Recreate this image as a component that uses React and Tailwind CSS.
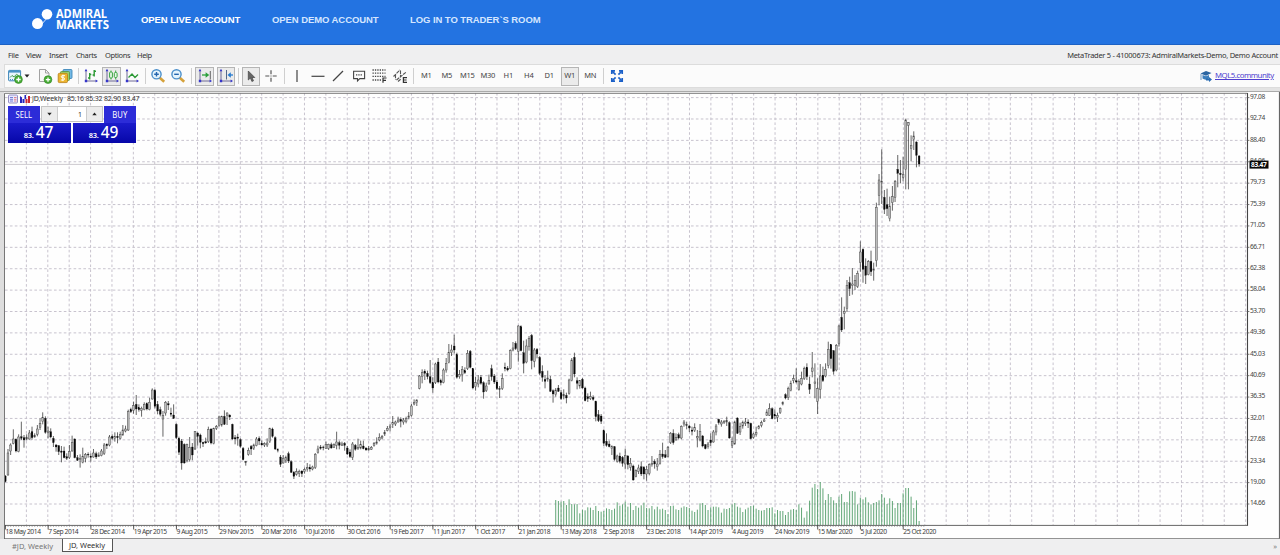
import { clsx } from "clsx";

const STEP = 2.672;
const X0 = 5;
const TOP = 92;

// each segment: first bar, y of its origin, and "high top bottom low dir" in thirds of a pixel
const SEGMENTS = [
  {
    first: 0,
    top: 375,
    bars: `300 303 320 322 d|222 234 300 302 u|205 210 228 240 u|163 192 205 208 u|190 193 228 232 d|178 186 230 232 u|140 185 190 195 d|180 188 195 218 d
178 188 192 196 u|165 174 192 194 u|155 170 188 194 d|175 182 186 188 u|150 162 178 184 u|130 145 158 165 u|112 128 140 148 u|124 130 172 176 d
155 168 172 190 u|160 170 186 190 d|183 190 203 216 d|207 210 216 230 d|210 212 230 240 d|213 228 232 262 d|215 228 248 250 d|235 245 250 255 d
210 230 248 252 u|182 202 228 230 u|190 192 248 250 d|240 248 256 258 d|238 250 254 278 u|218 244 262 265 u|234 238 250 262 u|232 238 240 248 d
235 244 247 260 d|222 234 246 248 u|230 236 246 252 d|232 240 244 246 u|222 228 242 244 u|204 210 236 240 u|205 208 212 222 d|180 186 210 214 u
178 184 190 196 d|172 184 190 200 u|172 184 188 205 d|170 178 190 194 u|150 165 180 182 u|152 162 168 172 u|104 110 165 168 u|98 104 110 114 d
80 92 106 116 u|60 88 102 120 d|88 98 104 110 d|95 100 106 125 u|82 88 104 106 u|82 86 102 106 d|68 82 104 106 u|40 45 72 74 u
42 46 94 100 d|78 88 108 118 d|95 104 118 124 d|108 122 132 185 u|78 82 114 122 u|78 86 90 105 d|98 114 118 125 d|88 120 130 132 d
145 148 188 192 d|185 190 232 240 d|192 198 264 284 d|205 208 264 266 d|206 208 256 262 u|186 218 254 260 u|204 216 240 256 d|168 170 222 225 u
172 174 184 212 d|176 180 202 220 d|200 202 206 216 d|188 200 204 206 d|155 164 200 204 u|160 162 204 208 d|158 160 206 208 u|150 155 160 165 u
122 126 152 155 u|122 124 150 155 u|106 124 148 150 d|112 114 122 150 u|118 120 126 135 d|146 148 192 194 d|180 188 192 208 d|176 186 190 212 d
190 194 214 218 d|216 220 254 256 d|258 260 262 272 d|218 226 238 242 u|210 214 222 240 d|206 210 220 225 u|186 192 212 214 u|184 190 198 210 d
196 205 210 212 d|202 206 210 216 u|190 204 210 216 u|158 160 200 204 u|158 162 184 188 d|184 188 222 225 d|220 224 226 232 d|240 246 268 276 d
240 250 264 266 u|242 248 256 264 u|230 236 258 264 d|256 260 292 294 d|288 292 304 312 d|280 290 298 302 u|284 290 296 306 u|286 288 296 306 d
278 284 290 296 u|264 278 282 290 u|268 278 282 290 d|272 276 282 286 u|234 238 278 282 u|212 222 232 236 u|210 216 220 224 d|212 216 218 226 d
200 208 220 222 u|206 208 220 225 u`,
  },
  {
    first: 122,
    top: 320,
    bars: `368 374 384 386 d|370 374 382 384 u|335 366 376 388 u|362 368 376 388 d|365 372 376 378 u|366 370 376 392 d
378 384 402 405 d|388 396 410 414 d|366 372 412 420 u|372 376 388 392 d|356 382 386 390 u|362 374 384 388 u|362 378 386 388 d|382 384 390 392 d
378 386 390 392 u|378 382 388 390 u|366 370 376 380 u|352 366 370 374 u|340 352 360 364 u|345 350 354 358 u|330 338 342 348 u|318 325 332 334 u
312 318 322 334 u|288 308 314 324 u|302 306 312 318 u|290 300 306 308 u|292 298 304 322 d|294 300 306 314 u|290 296 304 310 u|276 288 292 298 u
252 258 286 290 u|238 248 252 256 u|238 240 248 258 u|165 168 205 208 u|148 158 170 190 u|148 154 160 180 d|152 160 170 178 d|120 170 188 192 d
172 188 204 218 d|128 132 188 192 u|114 126 186 190 d|176 182 188 196 d|145 150 188 190 u|114 130 150 158 u|72 98 128 130 u|74 90 98 108 u
44 78 90 100 d|98 104 172 176 d|150 164 170 176 u|138 148 164 185 u|142 152 158 162 d|90 100 146 150 u|90 94 142 145 d|144 146 204 208 d
170 188 200 212 u|165 180 192 202 u|165 172 190 194 d|184 188 216 236 d|188 198 212 216 u|164 182 192 194 u|134 146 170 182 d|162 168 186 192 d
180 186 206 210 d|198 206 208 234 d|160 176 206 210 u|128 142 146 154 d|138 144 150 154 d|88 92 146 148 u|66 84 90 94 u|64 70 86 90 d
16 18 94 125 u|16 20 92 94 d|62 98 130 160 d|58 78 126 130 u|48 56 80 92 u|42 46 122 148 d|84 90 124 142 u|84 88 102 115 d
108 112 160 165 d|136 154 172 185 d|166 178 184 205 d|152 174 178 185 u|168 178 214 216 d|208 212 222 248 d|204 210 224 230 u|195 204 214 216 d
210 218 236 240 d|208 224 228 238 u|218 226 234 250 d|176 180 220 224 u|114 120 182 184 u|98 112 162 172 d|172 182 190 208 d|180 182 198 206 u
174 178 204 206 d|200 204 242 244 d|220 230 236 246 d|215 230 236 240 u|226 232 238 242 d|242 244 290 304 d|270 284 302 306 d|282 288 304 312 d
328 332 370 378 d|340 364 376 380 d|362 372 380 382 d|376 380 386 405 u|378 380 418 422 d|404 408 424 428 u|398 408 424 430 d|408 412 430 440 d
386 406 432 448 u|405 408 434 448 d|414 430 442 452 u|434 438 480 482 d|448 452 470 472 u|434 444 454 462 u|424 440 462 468 d|438 442 462 478 d
438 448 462 482 u|430 434 460 466 u|408 430 434 440 u|418 424 432 446 d|414 432 440 452 u|390 404 430 434 u|368 402 410 416 d|390 404 412 414 d
378 382 410 412 u|336 340 368 372 u|328 340 368 374 d|340 352 360 362 u|338 344 354 358 d|316 320 354 358 u|300 306 312 320 u|305 314 316 328 d
314 318 324 336 d|320 330 334 346 d|310 322 332 336 u|330 350 354 382 u|312 334 360 364 u|345 348 378 382 d|372 374 386 388 d|366 372 380 386 u
340 360 368 378 d|330 336 366 368 u|312 318 336 346 u|296 298 308 314 d|300 306 312 320 u|300 304 308 312 u|290 302 306 318 u|304 308 354 356 d
352 364 376 384 u|302 306 372 374 u|292 294 340 342 d|308 320 336 345 u|302 308 318 326 u|294 306 310 318 u|298 306 310 324 d|308 310 356 358 d
338 342 352 356 u|320 338 344 350 u|315 320 326 328 u|302 308 316 322 u|294 300 304 306 u|268 276 286 288 u|250 266 286 288 u|262 266 296 298 d
268 284 288 298 d|278 286 292 306 u|262 266 278 282 u|244 248 252 256 u|220 224 234 238 d|200 206 232 240 u|182 190 212 214 u|164 176 182 190 u
145 182 186 190 d|178 184 208 212 u|155 176 192 196 u|140 146 176 180 u|130 142 170 180 d|170 192 208 222 d|96 144 154 172 u|130 186 190 235 u
175 206 244 282 u|132 168 208 236 u|140 166 182 186 d|130 148 168 172 u|65 88 136 145 u|72 74 116 146 d|90 92 154 164 d|72 76 150 154 u`,
  },
  {
    first: 312,
    top: 100,
    bars: `674 678 730 740 u|592 652 690 696 d|620 634 640 688 u|540 556 626 636 u|530 548 566 588 d|504 552 556 584 u|525 542 556 570 u|512 520 560 564 u
424 456 488 515 u|445 448 508 548 d|475 498 526 552 d|480 485 524 526 u|452 484 515 528 d|488 508 512 542 u|308 322 482 500 u|222 240 286 316 u
148 244 248 312 u|270 292 328 342 d|266 314 326 348 d|290 318 356 364 u|258 290 308 332 u|240 244 292 306 u|165 208 220 262 d|180 220 224 250 d
170 224 232 244 u|56 60 208 268 u|66 68 76 268 u|106 136 146 184 u|94 108 118 150 u|124 126 166 202 d|165 168 192 200 d`,
  },
];

const candles = SEGMENTS.flatMap(({ first, top, bars }) =>
  bars.split(/[|\n]/).map((bar, i) => {
    const [h, t, b, l, dir] = bar.trim().split(" ");
    const y = (v) => top - TOP + Number(v) / 3;
    return { x: X0 + (first + i) * STEP, high: y(h), top: y(t), bottom: y(b), low: y(l), down: dir === "d" };
  })
);

const VOLUME_FIRST = 206;
const VOLUMES = [
  540, 543, 545, 543, 555, 538, 552, 553, 552, 580, 569, 571, 562, 563, 570, 558, 573, 575, 573, 565, 567, 570, 566, 547, 557, 553, 545, 560, 549, 570, 558, 563,
  556, 548, 564, 565, 558, 568, 560, 568, 566, 570, 582, 558, 557, 568, 570, 563, 559, 561, 564, 572, 576, 569, 550, 549, 555, 570, 562, 560, 560, 562, 578, 566,
  567, 564, 553, 549, 560, 563, 576, 568, 563, 558, 557, 566, 570, 572, 570, 564, 564, 562, 580, 570, 573, 573, 585, 576, 569, 567, 570, 553, 563, 593, 574, 542,
  503, 492, 507, 486, 505, 540, 522, 531, 541, 549, 530, 522, 546, 546, 514, 513, 515, 553, 533, 538, 532, 547, 553, 549, 546, 541, 522, 533, 552, 535, 543, 564,
  549, 549, 520, 504, 504, 530, 564, 541, 603,
];

const PRICES = ["97.08", "92.74", "88.40", "84.06", "79.73", "75.39", "71.05", "66.71", "62.38", "58.04", "53.70", "49.36", "45.03", "40.69", "36.35", "32.01", "27.68", "23.34", "19.00", "14.66"];

const DATES = [
  "18 May 2014", "7 Sep 2014", "28 Dec 2014", "19 Apr 2015", "9 Aug 2015", "29 Nov 2015", "20 Mar 2016", "10 Jul 2016", "30 Oct 2016", "19 Feb 2017", "11 Jun 2017",
  "1 Oct 2017", "21 Jan 2018", "13 May 2018", "2 Sep 2018", "23 Dec 2018", "14 Apr 2019", "4 Aug 2019", "24 Nov 2019", "15 Mar 2020", "5 Jul 2020", "25 Oct 2020",
];

const priceY = (i) => 5.6 + i * 21.39;

const Chart = () => (
  <svg width="1280" height="447" viewBox="0 0 1280 447" className="block font-['Noto_Sans',sans-serif]">
    <rect x="4" y="0" width="1274" height="447" fill="#fefefe" />
    <rect x="0" y="0" width="4" height="447" fill="#dedede" />
    {/* grid */}
    <g stroke="#c2bcc8" strokeWidth="0.9" strokeDasharray="2.6 2.3">
      {PRICES.map((p, i) => <line key={p} x1="5" x2="1247" y1={priceY(i)} y2={priceY(i)} />)}
      {Array.from({ length: 58 }, (_, i) => (
        <line key={i} y1="1" y2="433" x1={26.4 + i * 21.39} x2={26.4 + i * 21.39} />
      ))}
    </g>
    <line x1="5" x2="1247" y1="72.4" y2="72.4" stroke="#c6c3c9" strokeWidth="0.9" />

    {/* volumes */}
    <g stroke="#4f9c66" strokeWidth="0.9">
      {VOLUMES.map((v, i) => {
        const x = X0 + (VOLUME_FIRST + i) * STEP + 0.3;
        return <line key={i} x1={x} x2={x} y1={228 + v / 3} y2="433" />;
      })}
    </g>

    {/* candles */}
    {candles.map((c, i) => (
      <g key={i}>
        <line x1={c.x + 0.3} x2={c.x + 0.3} y1={c.high} y2={c.low} stroke="#333" strokeWidth="0.75" />
        <rect
          x={c.x - 0.6}
          y={c.top}
          width="1.8"
          height={c.bottom - c.top}
          fill={c.down ? "#080808" : "#bdbdbd"}
          stroke={c.down ? "#080808" : "#444"}
          strokeWidth={c.down ? 0.2 : 0.45}
        />
      </g>
    ))}

    {/* frame and axes */}
    <path d="M4.5 447V1.3H1247.5" fill="none" stroke="#777" />
    <path d="M1247.5 1V434" stroke="#444" strokeWidth="1.1" />
    <path d="M5 433.4H1248" stroke="#666" strokeWidth="1" />
    <path d="M5 434.3H925" stroke="#666" strokeWidth="0.7" strokeDasharray="0.8 1.87" />
    <path d="M4 446.8H1279.5V0" fill="none" stroke="#666" />
    {PRICES.map((p, i) => (
      <g key={p}>
        <path d={`M1247 ${priceY(i)}h2.4`} stroke="#555" strokeWidth="0.8" />
        <text x="1250" y={priceY(i) + 1.3} fontSize="6.6" textLength="15.2" lengthAdjust="spacing" fill="#444">{p}</text>
      </g>
    ))}
    <rect x="1249.5" y="68.6" width="19" height="8" fill="#080808" />
    <text x="1251" y="75" fontSize="6.6" fontWeight="700" textLength="15.8" lengthAdjust="spacing" fill="#fff">83.47</text>
    {DATES.map((d, i) => {
      const x = X0 + i * STEP * 16;
      return (
        <g key={d}>
          <path d={`M${x + 0.4} 433v4.5`} stroke="#444" strokeWidth="0.9" />
          <text x={x + 0.5} y="442.2" fontSize="6.7" letterSpacing="-0.42" fill="#3c3c3c">{d}</text>
        </g>
      );
    })}
  </svg>
);

const Logo = () => (
  <svg width="80" height="32" viewBox="0 -4 80 32" fill="#fff" className="font-['Open_Sans',sans-serif]">
    <circle cx="16" cy="6.2" r="5.3" />
    <circle cx="6.5" cy="15.6" r="5.5" />
    <path d="M10 17l7-8" stroke="#fff" strokeWidth="0.8" />
    <text x="25" y="10.4" fontSize="12" fontWeight="700" textLength="51" lengthAdjust="spacingAndGlyphs">ADMIRAL</text>
    <text x="25" y="20.6" fontSize="12" fontWeight="700" textLength="53" lengthAdjust="spacingAndGlyphs">MARKETS</text>
  </svg>
);

const Icon = ({ children, size = 16 }) => (
  <svg width={size} height={size} viewBox="0 0 16 16" fill="none" className="shrink-0">{children}</svg>
);

const Plus = ({ x, y }) => (
  <g>
    <circle cx={x} cy={y} r="3.9" fill="#49ad35" stroke="#2d8524" strokeWidth="0.6" />
    <path d={`M${x - 2.2} ${y}h4.4M${x} ${y - 2.2}v4.4`} stroke="#fff" strokeWidth="1.3" />
  </g>
);

const Axes = () => (
  <g>
    <path d="M3 2.5V13H13" stroke="#6f6b96" />
    <path d="M3 .8L1.6 3.2H4.4zM15 13l-2.4-1.4v2.8zM1.8 11.8h2.4v2.4H1.8z" fill="#3535c9" />
  </g>
);

const NewChartIcon = () => (
  <Icon>
    <rect x="1.6" y="2.4" width="12" height="10.4" rx="0.8" fill="#eaf5fd" stroke="#3b84b9" />
    <path d="M1.6 3.6h12" stroke="#4a93c6" strokeWidth="2" />
    <path d="M3 9.5l2-2 2 1.4 2.5-2.6 2 1.3" stroke="#49a04d" />
    <path d="M3 11.5h5" stroke="#4b91bf" strokeDasharray="1 1" />
    <Plus x={11.5} y={11.5} />
  </Icon>
);

const NewOrderIcon = () => (
  <Icon>
    <path d="M2.5 1.5h6l3.5 3.5v8.5H2.5z" fill="#f8f8f8" stroke="#999" strokeWidth="0.9" />
    <path d="M8.5 1.5V5H12" stroke="#999" strokeWidth="0.9" />
    <Plus x={11} y={11.6} />
  </Icon>
);

const DepositIcon = () => (
  <Icon>
    <rect x="6" y="1.5" width="9" height="9" rx="1" fill="#74b9e5" stroke="#317eb4" strokeWidth="0.8" />
    <rect x="3.5" y="3.5" width="9" height="9" rx="1" fill="#9ad06b" stroke="#55923c" strokeWidth="0.8" />
    <rect x="1.2" y="5.3" width="9.3" height="9.3" rx="1.2" fill="#ecb52f" stroke="#b77c15" strokeWidth="0.8" />
    <path d="M8 7.7H5.2c-1.2 0-1.2 2 0 2h1.4c1.2 0 1.2 2.3 0 2.3H3.8M5.9 6.7v6.4" stroke="#fff" strokeWidth="1" />
  </Icon>
);

const BarsIcon = () => (
  <Icon>
    <Axes />
    <path d="M6.7 5v6.5M5 10h1.7M6.7 6.5h1.6M11.2 2v6.5M9.6 7h1.6M11.2 3.3H13" stroke="#2c9a35" strokeWidth="1.4" />
  </Icon>
);

const CandlesIcon = () => (
  <Icon>
    <Axes />
    <path d="M7 2.5v9M11.7 2.5v9" stroke="#39a541" />
    <rect x="5.6" y="4" width="2.8" height="6" rx="1" fill="#e7f8e6" stroke="#39a541" />
    <rect x="10.3" y="4.5" width="2.8" height="5" rx="1" fill="#e7f8e6" stroke="#39a541" />
  </Icon>
);

const LineIcon = () => (
  <Icon>
    <Axes />
    <path d="M4.5 9.5L8 6l3 3.5 3-3" stroke="#2c9a35" strokeWidth="1.3" />
  </Icon>
);

const ZoomIcon = ({ plus }) => (
  <Icon>
    <path d="M9.5 9.5l4.7 4.3" stroke="#d5a13a" strokeWidth="2.6" />
    <circle cx="6.5" cy="6.3" r="4.6" fill="#e4f4fd" stroke="#4b8fca" strokeWidth="1.4" />
    <path d={plus ? "M4.2 6.3h4.6M6.5 4v4.6" : "M4.2 6.3h4.6"} stroke="#2364ad" strokeWidth="1.4" />
  </Icon>
);

const AutoScrollIcon = () => (
  <Icon>
    <Axes />
    <path d="M13.3 3v8.5" stroke="#666" />
    <path d="M5 7h4" stroke="#2ba03a" strokeWidth="1.3" />
    <path d="M8.6 4.3L12.3 7 8.6 9.7z" fill="#2ba03a" />
  </Icon>
);

const ShiftIcon = () => (
  <Icon>
    <Axes />
    <path d="M8.5 2v9.5" stroke="#55698a" />
    <path d="M12 7h3" stroke="#287bcf" strokeWidth="1.3" />
    <path d="M12.8 4.3L9.5 7l3.3 2.7z" fill="#287bcf" />
  </Icon>
);

const CursorIcon = () => (
  <Icon>
    <path d="M5.3 3v9l2.1-2 1.5 3.5 1.6-.7L9 9.5h2.8z" fill="#666" stroke="#444" strokeWidth="0.7" />
  </Icon>
);

const CrosshairIcon = () => (
  <Icon>
    <path d="M8 2.3v4M8 9.7v4M2.3 8h4M9.7 8h4" stroke="#555" strokeWidth="1.2" />
    <path d="M7.5 8h1" stroke="#555" />
  </Icon>
);

const Stroke = ({ d }) => (
  <Icon><path d={d} stroke="#444" strokeWidth="1.2" /></Icon>
);

const CommentIcon = () => (
  <Icon>
    <path d="M2.6 3.3h11v7.3H8.8L6.5 13v-2.4H2.6z" stroke="#444" strokeWidth="1.1" />
    <path d="M5 6.8h6.5" stroke="#444" strokeWidth="1.2" strokeDasharray="1.3 1" />
  </Icon>
);

const FiboIcon = () => (
  <Icon>
    <path d="M1.5 2h13M1.5 5.2h13M1.5 8.4h13M1.5 12h9" stroke="#444" strokeWidth="1.3" strokeDasharray="1.3 1.1" />
    <path d="M12 14.7V10h3.5M12 12.3h3" stroke="#333" strokeWidth="1.2" />
  </Icon>
);

const EquidistantIcon = () => (
  <Icon>
    <path d="M1.5 8.5L8 2M4.5 12L14 4.2M3.5 6.5v5M8.5 2.5v7M6 13.5l2.8-2.4" stroke="#555" strokeWidth="1.1" strokeDasharray="3.5 .8" />
    <path d="M15 14.3h-3.6v-4.6H15M11.4 12h3.2" stroke="#333" strokeWidth="1.2" />
  </Icon>
);

const FullscreenIcon = () => (
  <Icon>
    <path d="M2.8 6V2.8H6M10 2.8h3.2V6M13.2 10v3.2H10M6 13.2H2.8V10" stroke="#1b60c8" strokeWidth="1.7" />
    <path d="M3 3l3.6 3.6M13 3L9.4 6.6M13 13L9.4 9.4M3 13l3.6-3.6" stroke="#1b60c8" strokeWidth="1.7" />
  </Icon>
);

const Sep = ({ className = "w-1.5" }) => (
  <div className={clsx("flex h-4 shrink-0 justify-center", className)}>
    <div className="w-px bg-[#cfcfcf]" />
  </div>
);

const Tool = ({ children, pressed, className = "w-5" }) => (
  <button
    className={clsx(
      "flex h-[19px] shrink-0 items-center justify-center text-[7.5px] tracking-[-0.03em] text-[#444]",
      pressed && "border border-[#b5b5b5] bg-[#ebebeb]",
      className
    )}
  >
    {children}
  </button>
);

const PERIODS = ["M1", "M5", "M15", "M30", "H1", "H4", "D1", "W1", "MN"];

const Toolbar = () => (
  <div className="ml-1 flex h-6 shrink-0 items-center border-y border-l border-[#dcdcdc] bg-[#fbfbfb] pr-2">
    <Tool className="w-[19px]"><NewChartIcon /></Tool>
    <svg width="6" height="6" viewBox="0 0 6 6"><path d="M.5 1.5h5L3 4.5z" fill="#222" /></svg>
    <Tool className="w-5 ml-[5px]"><NewOrderIcon /></Tool>
    <Tool><DepositIcon /></Tool>
    <Sep />
    <Tool><BarsIcon /></Tool>
    <Tool pressed className="w-[19px] ml-px"><CandlesIcon /></Tool>
    <Tool className="w-[21px]"><LineIcon /></Tool>
    <Sep />
    <Tool><ZoomIcon plus /></Tool>
    <Tool><ZoomIcon /></Tool>
    <Sep className="w-[7px]" />
    <Tool pressed className="w-[19px]"><AutoScrollIcon /></Tool>
    <Tool pressed className="w-[18px] ml-[3px]"><ShiftIcon /></Tool>
    <Sep />
    <Tool pressed className="w-[18px] ml-px"><CursorIcon /></Tool>
    <Tool className="w-5 ml-px"><CrosshairIcon /></Tool>
    <Sep />
    <Tool><Stroke d="M8 2v12" /></Tool>
    <Tool className="w-[21px]"><Stroke d="M1.5 8.3h13" /></Tool>
    <Tool><Stroke d="M3 13L13 3" /></Tool>
    <Tool className="w-[21px]"><CommentIcon /></Tool>
    <Tool><FiboIcon /></Tool>
    <Tool className="w-[21px]"><EquidistantIcon /></Tool>
    <Sep />
    {PERIODS.map((p) => (
      <div key={p} className="flex w-[20.5px] shrink-0 justify-center">
        <Tool pressed={p === "W1"} className="w-[18px]">{p}</Tool>
      </div>
    ))}
    <Sep />
    <Tool><FullscreenIcon /></Tool>
    <a className="ml-auto flex items-center gap-[3px] text-[7.5px] text-[#4f3fd0] underline">
      <svg width="12" height="12" viewBox="0 0 12 12">
        <path d="M.5 3.5L6 1l5.5 2L6 5.8z" fill="#2b65a1" />
        <path d="M2.5 5v3.5C4.5 10 7 10 9 8.5V5L6 6.3z" fill="#3b7ebd" />
        <path d="M1 4v6" stroke="#4a82b5" strokeWidth="0.8" />
        <path d="M6 8.5h3V7l3 2.5L9 12v-1.5H6z" fill="#2a6db2" />
      </svg>
      <span className="w-[57px] tracking-[-0.06em] text-[7.8px]">MQL5.community</span>
    </a>
  </div>
);

const MENU = [
  ["File", "w-[18px]"],
  ["View", "w-[23px]"],
  ["Insert", "w-[27px]"],
  ["Charts", "w-[29px]"],
  ["Options", "w-[32px]"],
  ["Help", "w-[20px]"],
];

const TradePanel = () => (
  <div className="absolute left-2 top-[14px] w-32 text-white">
    <div className="flex h-[17px] justify-between">
      <div className="flex w-8 items-center justify-center bg-[#2c2cd8] text-[9px]">
        <span className="scale-x-85">SELL</span>
      </div>
      <div className="mb-px flex w-[62px] border border-[#c4c4c4] bg-white text-[7px] text-[#333]">
        <div className="flex w-4 items-center justify-center border-r border-[#ccc] bg-[#ececec]">
          <svg width="5" height="4" viewBox="0 0 5 4"><path d="M.3.8h4.4L2.5 3.4z" fill="#222" /></svg>
        </div>
        <span className="flex-1 pr-1 text-right leading-[15px]">1</span>
        <div className="flex w-4 items-center justify-center border-l border-[#ccc] bg-[#ececec]">
          <svg width="5" height="4" viewBox="0 0 5 4"><path d="M.3 3.2h4.4L2.5.6z" fill="#222" /></svg>
        </div>
      </div>
      <div className="flex w-8 items-center justify-center bg-[#2c2cd8] text-[9px]">
        <span className="scale-x-85">BUY</span>
      </div>
    </div>
    <div className="flex gap-0.5">
      {["47", "49"].map((n) => (
        <div key={n} className="flex h-5 flex-1 items-baseline justify-center bg-linear-to-b from-[#1b1bcb] to-[#0606a8] pr-0.5 leading-[19px]">
          <span className="text-[7.5px] font-semibold tracking-[-0.03em]">83.</span>
          <span className="ml-0.5 text-[15.5px] font-medium">{n}</span>
        </div>
      ))}
    </div>
  </div>
);

export default function App() {
  return (
    <div className="flex h-[555px] w-[1280px] flex-col overflow-hidden bg-[#efeff0] font-['Noto_Sans',sans-serif]">
      <header className="flex h-[45px] shrink-0 border-b border-[#1c61c4] bg-[#2373e1] font-['Liberation_Sans',sans-serif] text-[9.5px] font-bold text-[#d5e6ff]">
        <div className="w-[141px] pl-[31px] pt-1"><Logo /></div>
        <nav className="flex pt-[13px] leading-[14px] tracking-[-0.008em]">
          <a className="w-[131px] text-white">OPEN LIVE ACCOUNT</a>
          <a className="w-[138px]">OPEN DEMO ACCOUNT</a>
          <a className="whitespace-nowrap">LOG IN TO TRADER`S ROOM</a>
        </nav>
      </header>

      <div className="flex h-[19px] shrink-0 items-center pl-2 pr-[2px] pt-0.5 text-[7.5px] text-[#333]">
        {MENU.map(([label, width]) => (
          <span key={label} className={clsx("shrink-0 tracking-[-0.05em]", width)}>{label}</span>
        ))}
        <span className="ml-auto whitespace-nowrap tracking-[-0.28px]">MetaTrader 5 - 41000673: AdmiralMarkets-Demo, Demo Account</span>
      </div>

      <Toolbar />
      <div className="h-1 shrink-0 border-b border-[#aaa] bg-[#e3e3e3]" />

      <main className="relative h-[447px] shrink-0">
        <Chart />
        <div className="absolute left-2 top-[1px] flex h-3 items-center text-[7px] text-[#333]">
          <svg width="23" height="10" viewBox="0 0 23 10">
            <rect x="0.5" y="1" width="9" height="8" rx="1" fill="#e9eaff" stroke="#7d76b5" strokeWidth="0.8" />
            <path d="M2 3.5h3M2 5.3h3M2 7h3" stroke="#5662c9" strokeWidth="0.8" />
            <path d="M6 3.5h2.5M6 5.3h2.5M6 7h2.5" stroke="#db6b75" strokeWidth="0.8" />
            <path d="M12 2l2 1.5V9h-2zM14.5 5h2v4h-2zM16.5 1h1.5v4h-1.5z" fill="#2525bd" />
            <path d="M17.5 5h2v4h-2zM20 2h2v7h-2z" fill="#ca2731" />
          </svg>
          <span className="ml-px w-[35px] tracking-[-0.01em]">JD,Weekly</span>
          <span className="whitespace-nowrap tracking-[-0.2px]">85.16 85.32 82.90 83.47</span>
        </div>
        <TradePanel />
      </main>

      <footer className="flex h-4 shrink-0 items-start text-[7.5px] text-[#777]">
        <span className="w-[62px] pl-3 leading-[15px]">#JD, Weekly</span>
        <span className="-mt-px h-[14px] w-[51px] border border-t-0 border-[#555] bg-white pr-px text-center leading-[14px] text-[#333]">JD, Weekly</span>
        <span className="ml-auto pr-[3px] leading-[15px]">»</span>
      </footer>
    </div>
  );
}
